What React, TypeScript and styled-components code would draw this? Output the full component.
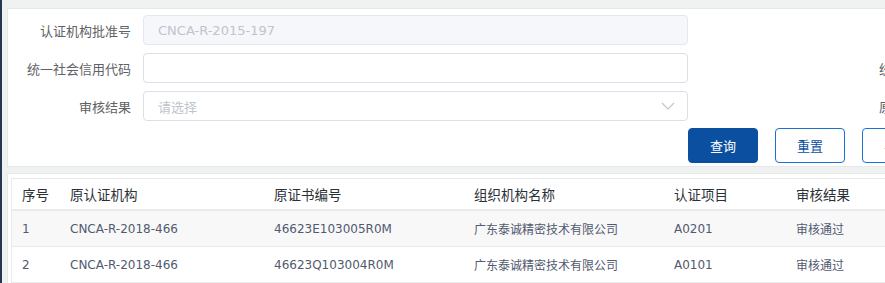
import React from "react";
import styled, { createGlobalStyle } from "styled-components";

const Global = createGlobalStyle`
  html, body { margin: 0; padding: 0; }
  body {
    width: 885px; height: 283px; overflow: hidden;
    background: #f0f2f2;
    font-family: "DejaVu Sans", "Noto Sans CJK SC", sans-serif;
  }
`;

const Shell = styled.div`
  display: flex;
  width: 885px;
  height: 283px;
  overflow: hidden;
`;

const Rail = styled.div`
  width: 2px;
  flex: none;
  background: #263754;
`;

const Main = styled.div`
  flex: 1;
  display: flex;
  flex-direction: column;
  gap: 6px;
  padding: 8px 0 0 5px;
  min-width: 0;
`;

const Card = styled.div<{ $pad: string }>`
  background: #fff;
  border: 1px solid #e6e8ea;
  border-right: none;
  padding: ${(p) => p.$pad};
  width: 1100px;
`;

const FormRow = styled.div`
  display: flex;
  align-items: center;
  height: 30px;
  margin-bottom: 8px;
`;

const Label = styled.div`
  width: 123px;
  flex: none;
  text-align: right;
  font-size: 13px;
  color: #606266;
  white-space: nowrap;
  margin-right: 12px;
`;

const SideLabel = styled.div`
  margin-left: 191px;
  font-size: 13px;
  color: #606266;
  white-space: nowrap;
`;

const Field = styled.div<{ $disabled?: boolean }>`
  width: 545px;
  height: 30px;
  box-sizing: border-box;
  flex: none;
  border: 1px solid ${(p) => (p.$disabled ? "#e4e7ed" : "#dcdfe6")};
  background: ${(p) => (p.$disabled ? "#f5f7fa" : "#fff")};
  border-radius: 4px;
  padding: 0 12px 0 14px;
  display: flex;
  align-items: center;
  justify-content: space-between;
  font-size: 13px;
  color: #c0c4cc;
`;

const Buttons = styled.div`
  display: flex;
  gap: 17px;
  padding-left: 680px;
  margin-top: -1px;
`;

const Button = styled.button<{ $primary?: boolean }>`
  width: 70px;
  height: 35px;
  flex: none;
  border-radius: 4px;
  font-family: inherit;
  font-size: 13px;
  border: 1px solid ${(p) => (p.$primary ? "#0b50a0" : "#1a73d0")};
  background: ${(p) => (p.$primary ? "#0b50a0" : "#fff")};
  color: ${(p) => (p.$primary ? "#fff" : "#0b50a0")};
  padding: 0;
`;

const Table = styled.div`
  border: 1px solid #e8eaec;
  border-right: none;
  border-bottom: none;
`;

const Row = styled.div<{ $head?: boolean; $stripe?: boolean }>`
  display: grid;
  grid-template-columns: 48px 204px 200px 200px 122px 1fr;
  align-items: center;
  height: ${(p) => (p.$head ? "30px" : "35px")};
  background: ${(p) => (p.$stripe ? "#f8f8f9" : "#fff")};
  border-bottom: ${(p) => (p.$head ? "2px" : "1px")} solid #e8eaec;
  font-size: ${(p) => (p.$head ? "13.5px" : "12px")};
  color: ${(p) => (p.$head ? "#2b2f36" : "#515a6e")};
`;

const Cell = styled.div`
  padding-left: 10px;
  white-space: nowrap;
`;

const Chevron = () => (
  <svg width="14" height="8" viewBox="0 0 14 8" fill="none">
    <polyline points="1,1 7,7 13,1" stroke="#c0c4cc" strokeWidth="1.2" />
  </svg>
);

const rows = [
  ["1", "CNCA-R-2018-466", "46623E103005R0M", "广东泰诚精密技术有限公司", "A0201", "审核通过"],
  ["2", "CNCA-R-2018-466", "46623Q103004R0M", "广东泰诚精密技术有限公司", "A0101", "审核通过"],
];

export default function App() {
  return (
    <Shell>
      <Global />
      <Rail />
      <Main>
        <Card $pad="6px 0 3px 0">
          <FormRow>
            <Label>认证机构批准号</Label>
            <Field $disabled>CNCA-R-2015-197</Field>
          </FormRow>
          <FormRow>
            <Label>统一社会信用代码</Label>
            <Field />
            <SideLabel>统一社会信用代码</SideLabel>
          </FormRow>
          <FormRow>
            <Label>审核结果</Label>
            <Field>
              <span>请选择</span>
              <Chevron />
            </Field>
            <SideLabel>原认证机构</SideLabel>
          </FormRow>
          <Buttons>
            <Button $primary>查询</Button>
            <Button>重置</Button>
            <Button>导出</Button>
          </Buttons>
        </Card>
        <Card $pad="4px 0 0 3px">
          <Table>
            <Row $head>
              <Cell>序号</Cell>
              <Cell>原认证机构</Cell>
              <Cell>原证书编号</Cell>
              <Cell>组织机构名称</Cell>
              <Cell>认证项目</Cell>
              <Cell>审核结果</Cell>
            </Row>
            {rows.map((r, i) => (
              <Row key={i} $stripe={i % 2 === 0}>
                {r.map((c, j) => (
                  <Cell key={j}>{c}</Cell>
                ))}
              </Row>
            ))}
          </Table>
        </Card>
      </Main>
    </Shell>
  );
}
